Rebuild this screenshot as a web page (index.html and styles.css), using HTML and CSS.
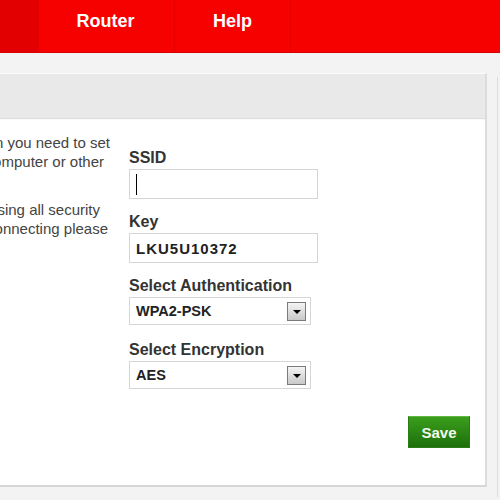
FILE: index.html
```html
<!DOCTYPE html>
<html lang="en">
<head>
    <meta charset="UTF-8">
    <meta name="viewport" content="width=device-width, initial-scale=1.0">
    <title>Wireless Settings</title>
    <link rel="stylesheet" href="styles.css">
</head>
<body>
    <div class="page">
        <!-- Menu principal -->
        <nav class="nav">
            <a class="nav-item active" href="#" aria-label="Wireless"></a>
            <a class="nav-item router" href="#">Router</a>
            <a class="nav-item help" href="#">Help</a>
        </nav>

        <main class="main">
            <section class="panel">
                <div class="panel-header"></div>

                <div class="panel-body">
                    <div class="cols">
                        <div class="intro">
                            <p>
                                <span class="line l1">the router wirelessly, then you need to set</span>
                                <span class="line l2">wireless settings on your computer or other</span>
                                <span class="line">&nbsp;</span>
                            </p>
                            <p>
                                <span class="line l3">We recommend using all security</span>
                                <span class="line l4">If you have trouble connecting please</span>
                            </p>
                        </div>

                        <form class="form">
                            <label class="label">SSID</label>
                            <div class="field input"><span class="caret"></span></div>

                            <label class="label">Key</label>
                            <div class="field input key">LKU5U10372</div>

                            <label class="label">Select Authentication</label>
                            <div class="field select">
                                <span>WPA2-PSK</span>
                                <span class="arrow"></span>
                            </div>

                            <label class="label">Select Encryption</label>
                            <div class="field select last">
                                <span>AES</span>
                                <span class="arrow"></span>
                            </div>
                        </form>
                    </div>

                    <div class="actions">
                        <button class="save" type="button">Save</button>
                    </div>
                </div>
            </section>

            <aside class="side"></aside>
        </main>
    </div>
</body>
</html>
```

FILE: styles.css
```css
* {
    margin: 0;
    padding: 0;
    box-sizing: border-box;
}

body {
    font-family: "Liberation Sans", Arial, sans-serif;
    background: #f3f3f3;
    color: #333;
    overflow: hidden;
    height: 500px;
}

/* Pagina deslocada: so vemos um recorte */
.page {
    width: 700px;
    margin-left: -100px;
}

/* Menu */
.nav {
    display: flex;
    height: 53px;
    background: #f70000;
    border-bottom: 1px solid #d60000;
}

.nav-item {
    display: block;
    height: 52px;
    line-height: 42px;
    text-align: center;
    color: #fff;
    font-size: 18px;
    font-weight: 700;
    text-decoration: none;
    border-right: 1px solid #e60000;
}

.nav-item.active {
    width: 139px;
    background: #e30000;
}

.nav-item.router {
    width: 136px;
    padding-right: 2px;
}

.nav-item.help {
    width: 116px;
}

/* Conteudo */
.main {
    display: flex;
    align-items: flex-start;
    padding-top: 20px;
}

.panel {
    width: 587px;
    background: #fff;
    border-top: 1px solid #fbfbfb;
    border-right: 2px solid #dcdcdc;
    border-bottom: 2px solid #d6d6d6;
}

.panel-header {
    height: 45px;
    background: #e9e9e9;
    border-bottom: 1px solid #dedede;
}

.panel-body {
    padding: 13px 15px 37px 0;
    border-top: 1px solid #fafafa;
}

.cols {
    display: flex;
    gap: 18px;
}

/* texto alinhado a direita, transborda para a esquerda */
.intro {
    width: 211px;
    font-size: 15px;
    line-height: 19px;
    color: #444;
}

.intro p {
    display: flex;
    flex-direction: column;
    align-items: flex-end;
    margin-bottom: 10px;
}

.line {
    white-space: nowrap;
}

.l1 { margin-right: 1px; }
.l2 { margin-right: 7px; }
.l3 { margin-right: 11px; }
.l4 { margin-right: 3px; }

/* Formulario */
.form {
    width: 189px;
    margin-top: 15px;
    display: flex;
    flex-direction: column;
}

.label {
    font-size: 16px;
    line-height: 19px;
    font-weight: 700;
    color: #333;
    margin-bottom: 2px;
}

.field {
    display: flex;
    align-items: center;
    border: 1px solid #d6d6d6;
    background: #fff;
    padding-left: 6px;
    font-size: 15px;
    font-weight: 700;
    color: #222;
}

.input {
    height: 30px;
    margin-bottom: 13px;
}

.input.key {
    letter-spacing: 1px;
}

.caret {
    width: 1px;
    height: 21px;
    background: #000;
}

.select {
    width: 182px;
    height: 28px;
    margin-bottom: 15px;
    justify-content: space-between;
    padding-right: 4px;
    font-size: 14.5px;
}

.select.last {
    margin-bottom: 0;
}

.arrow {
    position: relative;
    width: 19px;
    height: 19px;
    border: 1px solid #7a7a7a;
    background: linear-gradient(#f4f4f4, #c9c9c9);
}

.arrow::after {
    content: '';
    position: absolute;
    left: 5px;
    top: 7px;
    border-left: 4px solid transparent;
    border-right: 4px solid transparent;
    border-top: 4px solid #000;
}

/* Botao salvar */
.actions {
    display: flex;
    justify-content: flex-end;
    margin-top: 27px;
}

.save {
    width: 62px;
    height: 32px;
    font-family: "Liberation Sans", Arial, sans-serif;
    font-size: 15px;
    font-weight: 700;
    color: #f2faee;
    background: linear-gradient(#3b9e1c, #1c6f0b);
    border: 1px solid #2a7d14;
    border-top-color: #62b544;
    cursor: pointer;
}

.side {
    width: 20px;
    height: 420px;
    margin-left: 10px;
    margin-top: 4px;
    border-left: 1px solid #dcdcdc;
}
```
